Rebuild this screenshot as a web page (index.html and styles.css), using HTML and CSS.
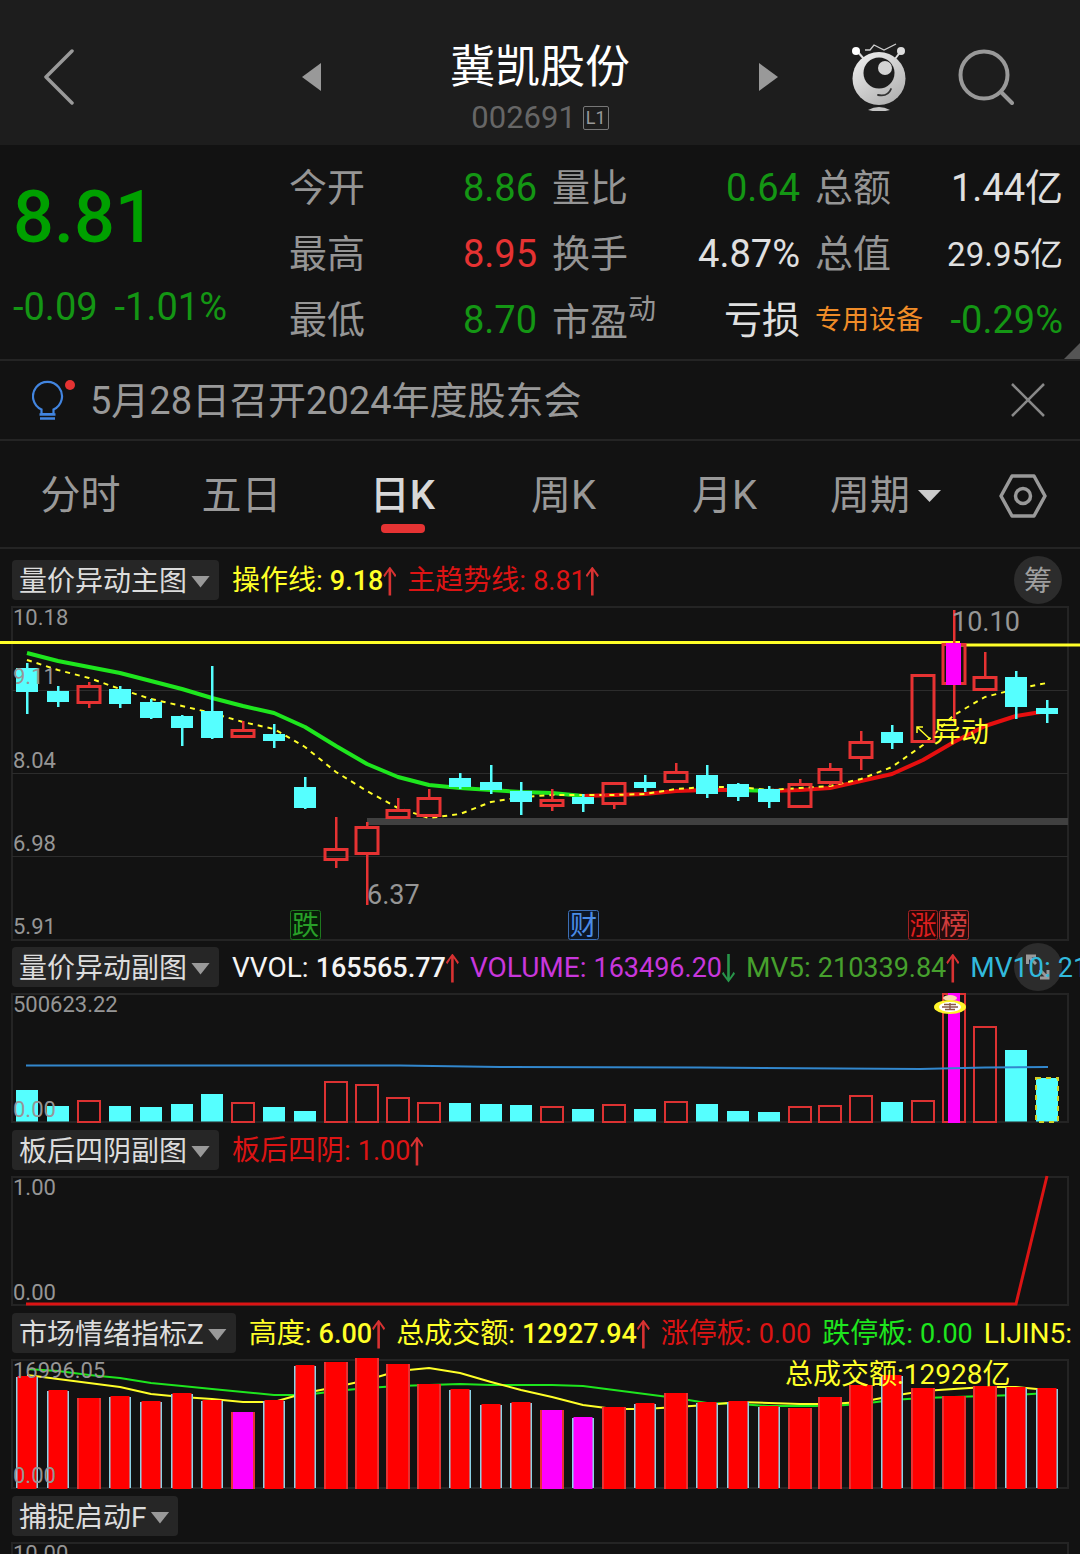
FILE: index.html
```html
<!DOCTYPE html>
<html lang="zh-CN">
<head>
<meta charset="utf-8">
<meta name="viewport" content="width=device-width, initial-scale=1">
<title>冀凯股份 002691</title>
<link rel="stylesheet" href="styles.css">
</head>
<body>
<div class="app">
  <header class="topbar">
    <div class="topbar-left">
      <button class="icon-btn" aria-label="返回"><svg width="30" height="56" viewBox="0 0 30 56"><path d="M28 2 2 28l26 26" fill="none" stroke="#9a9a9a" stroke-width="3.5" stroke-linecap="round" stroke-linejoin="round"/></svg></button>
      <button class="icon-btn" aria-label="上一只"><svg width="19" height="28" viewBox="0 0 19 28"><path d="M19 0v28L0 14z" fill="#999"/></svg></button>
    </div>
    <div class="title">
      <h1>冀凯股份</h1>
      <p class="code">002691<span class="level">L1</span></p>
    </div>
    <div class="topbar-right">
      <button class="icon-btn" aria-label="下一只"><svg width="19" height="28" viewBox="0 0 19 28"><path d="M0 0v28l19-14z" fill="#999"/></svg></button>
      <div class="tools">
        <button class="icon-btn" aria-label="智能助手">
          <svg width="54" height="68" viewBox="0 0 54 68">
            <defs><linearGradient id="face" x1="0" y1="0" x2="0.7" y2="1"><stop offset="0" stop-color="#f2f2f2"/><stop offset="1" stop-color="#b2b2b2"/></linearGradient></defs>
            <path d="M12 16 5 8M43 16l6-8" stroke="#ddd" stroke-width="2"/>
            <circle cx="4" cy="8" r="4" fill="#fff"/><circle cx="49" cy="8" r="4" fill="#ddd"/>
            <path d="M13 7h5l4-5 10 5 12-6" fill="none" stroke="#ccc" stroke-width="1.3"/>
            <circle cx="27" cy="35.500" r="26.500" fill="url(#face)"/>
            <circle cx="27" cy="30" r="15.500" fill="#1d1d1d"/>
            <circle cx="33" cy="25" r="7" fill="#d4d4d4"/>
            <path d="M26 52q10 2 13-6" fill="none" stroke="#333" stroke-width="1.800" stroke-linecap="round"/>
            <path d="M16 67q11-6 22 0q-11 3-22 0z" fill="#c4c4c4"/>
          </svg>
        </button>
        <button class="icon-btn" aria-label="搜索"><svg width="56" height="58" viewBox="0 0 56 58"><g fill="none" stroke="#999" stroke-width="4" stroke-linecap="round"><circle cx="26" cy="27" r="23.500"/><path d="m43 44 11 11"/></g></svg></button>
      </div>
    </div>
  </header>

  <section class="quote">
    <div class="price">
      <div class="last">8.81</div>
      <div class="change"><span>-0.09</span><span>-1.01%</span></div>
    </div>
    <dl class="stats">
      <div><dt>今开</dt><dd class="down">8.86</dd></div>
      <div><dt>量比</dt><dd class="down">0.64</dd></div>
      <div><dt>总额</dt><dd>1.44亿</dd></div>
      <div><dt>最高</dt><dd class="up">8.95</dd></div>
      <div><dt>换手</dt><dd>4.87%</dd></div>
      <div><dt>总值</dt><dd class="small">29.95亿</dd></div>
      <div><dt>最低</dt><dd class="down">8.70</dd></div>
      <div><dt>市盈<sup>动</sup></dt><dd>亏损</dd></div>
      <div><dt class="sector">专用设备</dt><dd class="down">-0.29%</dd></div>
    </dl>
  </section>

  <div class="notice">
    <svg class="bulb" width="44" height="42" viewBox="0 0 44 42">
      <g fill="none" stroke="#4285e0" stroke-width="2.200"><path d="M9.500 35v-4.500A14.500 14.500 0 1 1 21.500 30.500V35z"/><path d="M7.500 35.500h16M8 39.500h15" stroke-width="2.400"/></g>
      <circle cx="38" cy="6" r="5" fill="#e53333"/>
    </svg>
    <a href="#notice">5月28日召开2024年度股东会</a>
    <button class="icon-btn" aria-label="关闭"><svg width="36" height="36" viewBox="0 0 36 36"><path d="m2 2 32 32M34 2 2 34" stroke="#888" stroke-width="2.500"/></svg></button>
  </div>

  <nav class="tabs">
    <button>分时</button>
    <button>五日</button>
    <button class="active">日K</button>
    <button>周K</button>
    <button>月K</button>
    <button>周期<svg width="23" height="12" viewBox="0 0 23 12"><path d="M0 0h23L11.500 12z" fill="#ccc"/></svg></button>
    <button aria-label="设置"><svg width="48" height="44" viewBox="0 0 48 44"><g fill="none" stroke="#999" stroke-width="3.500" stroke-linejoin="round"><path d="M13 2h22l11 20-11 20H13L2 22z"/><circle cx="24" cy="22" r="7.500"/></g></svg></button>
  </nav>

  <section>
    <div class="head head-main">
      <button class="pill">量价异动主图<i class="caret"></i></button>
      <span class="ind yellow strong">操作线:<b>9.18</b><i class="arrow"></i></span>
      <span class="ind red">主趋势线:<b>8.81</b><i class="arrow"></i></span>
      <button class="round chips">筹</button>
    </div>
    <svg class="chart" id="main-chart" viewBox="0 606 1080 334">
      <path class="frame" d="M12 607h1056v333H12z"/>
      <path class="grid" d="M12 690.500h1056M12 773.500h1056M12 856.500h1056"/>
      <path d="M367 821.500h701" stroke="#404040" stroke-width="7"/>
      <path d="M0 642.500h960M960 645h120" stroke="#ffff28" stroke-width="3"/>
      <g data-lines></g>
      <g data-bars></g>
      <g class="axis"><text x="13" y="625">10.18</text><text x="13" y="684">9.11</text><text x="13" y="768">8.04</text><text x="13" y="851">6.98</text><text x="13" y="934">5.91</text></g>
      <g class="peak"><text x="952" y="631">10.10</text><text x="367" y="904">6.37</text></g>
      <path d="M930 739 917 727m0 6v-6h6" fill="none" stroke="#ffff28" stroke-width="1.500"/>
      <text class="note" x="933" y="742">异动</text>
      <g class="tag tag-green"><rect x="290.500" y="910.500" width="30" height="29" rx="2"/><text x="305.500" y="935">跌</text></g>
      <g class="tag tag-blue"><rect x="568.500" y="910.500" width="30" height="29" rx="2"/><text x="583.500" y="935">财</text></g>
      <g class="tag tag-red"><rect x="908.500" y="910.500" width="29" height="29" rx="2"/><text x="923" y="935">涨</text></g>
      <g class="tag tag-rose"><rect x="939.500" y="910.500" width="29" height="29" rx="2"/><text x="954" y="935">榜</text></g>
    </svg>
  </section>

  <section>
    <div class="head">
      <button class="pill">量价异动副图<i class="caret"></i></button>
      <span class="ind white strong">VVOL:<b>165565.77</b><i class="arrow"></i></span>
      <span class="ind violet">VOLUME:<b>163496.20</b><i class="arrow fall"></i></span>
      <span class="ind moss">MV5:<b>210339.84</b><i class="arrow"></i></span>
      <span class="ind aqua">MV10:<b>21</b></span>
      <button class="round expand" aria-label="展开"><svg width="24" height="26" viewBox="0 0 24 26"><g fill="none" stroke="#999" stroke-width="3"><path d="M1.500 10V2H10M2 2l8 8M22 16v8h-8M22 24l-8-8"/></g></svg></button>
    </div>
    <svg class="chart" id="volume-chart" viewBox="0 993 1080 130">
      <path class="frame" d="M12 994h1056v128H12z"/>
      <g data-bars></g>
      <g data-lines></g>
      <g><ellipse cx="950" cy="998" rx="7" ry="3" fill="#f6d9b0"/><ellipse cx="950" cy="1007" rx="16" ry="7" fill="#fff52a"/><ellipse cx="950" cy="1007" rx="11" ry="5" fill="#fff"/><path d="M944 1004.500h12M942 1007h16M945 1009.500h10M950 1003v7" stroke="#8a5a48" stroke-width="1.400"/></g>
      <g class="axis"><text x="13" y="1012">500623.22</text><text x="13" y="1117">0.00</text></g>
    </svg>
  </section>

  <section>
    <div class="head">
      <button class="pill">板后四阴副图<i class="caret"></i></button>
      <span class="ind red">板后四阴:<b>1.00</b><i class="arrow"></i></span>
    </div>
    <svg class="chart" viewBox="0 1176 1080 130">
      <path class="frame" d="M12 1177h1056v128H12z"/>
      <path d="M26 1304h990l31-128" fill="none" stroke="#dc1414" stroke-width="3"/>
      <g class="axis"><text x="13" y="1195">1.00</text><text x="13" y="1300">0.00</text></g>
    </svg>
  </section>

  <section>
    <div class="head">
      <button class="pill">市场情绪指标Z<i class="caret"></i></button>
      <span class="ind yellow strong">高度:<b>6.00</b><i class="arrow"></i></span>
      <span class="ind yellow strong">总成交额:<b>12927.94</b><i class="arrow"></i></span>
      <span class="ind red">涨停板:<b>0.00</b></span>
      <span class="ind green">跌停板:<b>0.00</b></span>
      <span class="ind yellow">LIJIN5:</span>
    </div>
    <svg class="chart" id="mood-chart" viewBox="0 1359 1080 130">
      <path class="frame" d="M12 1360h1056v128H12z"/>
      <g data-lines></g>
      <g data-bars></g>
      <text class="note" x="785" y="1384">总成交额:12928亿</text>
      <g class="axis"><text x="13" y="1378">16996.05</text><text x="13" y="1483">0.00</text></g>
    </svg>
  </section>

  <section>
    <div class="head">
      <button class="pill">捕捉启动F<i class="caret"></i></button>
    </div>
    <svg class="chart" viewBox="0 1542 1080 130">
      <path class="frame" d="M12 1543h1056v128H12z"/>
      <g class="axis"><text x="13" y="1561">10.00</text></g>
    </svg>
  </section>
</div>
<script src="script.js"></script>
</body>
</html>
```
FILE: styles.css
```css
* { box-sizing: border-box; }

body {
  margin: 0;
  background: #121212;
  color: #e0e0e0;
  font-family: Roboto, "Noto Sans CJK SC", sans-serif;
  line-height: 1.2;
}

button {
  margin: 0;
  padding: 0;
  border: 0;
  background: none;
  color: inherit;
  font: inherit;
  cursor: pointer;
}

h1, p, dl, dd { margin: 0; }
svg { display: block; }

.app { height: 100vh; overflow: hidden; }

/* top bar */
.topbar {
  display: grid;
  grid-template-columns: 1fr 438px 1fr;
  height: 145px;
  background: #1d1d1d;
}
.topbar-left, .topbar-right {
  display: flex;
  align-items: center;
  justify-content: space-between;
  padding-top: 9px;
}
.topbar-left { padding-left: 44px; }
.topbar-right { padding-right: 66px; }
.tools { display: flex; align-items: center; gap: 52px; }
.title { padding-top: 38px; text-align: center; }
.title h1 {
  color: #fff;
  font-size: 45px;
  font-weight: 400;
  line-height: 60px;
}
.code {
  display: flex;
  align-items: center;
  justify-content: center;
  gap: 7px;
  color: #666;
  font-size: 31px;
  line-height: 40px;
}
.level {
  padding: 0 2px;
  border: 1px solid #777;
  border-radius: 2px;
  color: #999;
  font-size: 18px;
  line-height: 22px;
}

/* quote */
.quote {
  position: relative;
  display: grid;
  grid-template-columns: 276px 1fr;
  padding: 9px 17px 7px 13px;
  border-bottom: 2px solid #242424;
}
.quote::after {
  content: "";
  position: absolute;
  right: 0;
  bottom: 0;
  width: 16px;
  height: 16px;
  background: #555;
  clip-path: polygon(100% 0, 100% 100%, 0 100%);
}
.price { color: #00a000; }
.last {
  padding-top: 20px;
  font-size: 72px;
  font-weight: 500;
  line-height: 88px;
}
.change {
  display: flex;
  gap: 17px;
  padding-top: 20px;
  color: #149614;
  font-size: 38px;
  line-height: 50px;
}
.stats {
  display: grid;
  grid-template-columns: repeat(3, 1fr);
  column-gap: 15px;
}
.stats div {
  display: flex;
  align-items: center;
  justify-content: space-between;
  height: 66px;
  padding-top: 3px;
  font-size: 38px;
  white-space: nowrap;
}
.stats dt { color: #959595; }
.stats sup { font-size: 28px; line-height: 28px; vertical-align: 16px; }
.stats .sector { color: #f08c28; font-size: 27px; }
.stats .down { color: #149614; }
.stats .up { color: #e63232; }
.stats .small { font-size: 33px; }

/* notice */
.notice {
  display: flex;
  align-items: center;
  height: 80px;
  padding: 0 34px 0 32px;
  border-bottom: 2px solid #242424;
}
.notice a {
  flex: 1;
  margin-left: 14px;
  padding-top: 4px;
  color: #999;
  font-size: 38px;
  text-decoration: none;
}

/* tabs */
.tabs {
  display: grid;
  grid-template-columns: repeat(6, 161fr) 114fr;
  height: 108px;
  border-bottom: 2px solid #242424;
  color: #999;
  font-size: 40px;
}
.tabs button {
  position: relative;
  display: flex;
  align-items: center;
  justify-content: center;
  gap: 8px;
  padding-top: 4px;
}
.tabs .active { color: #d8d8d8; font-weight: 500; }
.tabs .active::after {
  content: "";
  position: absolute;
  bottom: 14px;
  width: 44px;
  height: 9px;
  border-radius: 4px;
  background: #e53333;
}

/* indicator rows */
.head {
  position: relative;
  display: flex;
  align-items: center;
  gap: 11px;
  height: 53px;
  padding-left: 12px;
  overflow: hidden;
  white-space: nowrap;
  font-size: 28px;
}
.head-main { height: 57px; padding-top: 4px; }
.pill {
  display: flex;
  flex: none;
  align-items: center;
  gap: 4px;
  height: 40px;
  margin-right: 2px;
  padding: 4px 9px 0 7px;
  border-radius: 4px;
  background: #262626;
  color: #dcdcdc;
}
.caret {
  width: 19px;
  height: 12px;
  background: #999;
  clip-path: polygon(0 0, 100% 0, 50% 100%);
}
.ind {
  position: relative;
  z-index: 1;
  display: flex;
  flex: none;
  align-items: center;
  padding-top: 3px;
  pointer-events: none;
}
.ind b { margin-left: 7px; font-size: 27px; font-weight: 400; }
.strong b { font-weight: 500; }
.arrow {
  width: 13px;
  height: 29px;
  background: #d83232;
  clip-path: polygon(50% 0, 100% 30%, 90% 37%, 60% 16%, 60% 100%, 40% 100%, 40% 16%, 10% 37%, 0 30%);
}
.arrow.fall {
  background: #28964a;
  clip-path: polygon(50% 100%, 100% 70%, 90% 63%, 60% 84%, 60% 0, 40% 0, 40% 84%, 10% 63%, 0 70%);
}
.yellow { color: #ffff28; }
.red { color: #dc1414; }
.white { color: #f4f4f4; }
.violet { color: #c837dc; }
.moss { color: #46a02d; }
.aqua { color: #32b9dc; }
.green { color: #1ee61e; }

.round {
  display: flex;
  align-items: center;
  justify-content: center;
  width: 48px;
  height: 48px;
  border-radius: 50%;
  background: #2c2c2c;
  color: #a0a0a0;
}
.chips { margin: 0 18px 0 auto; padding-top: 4px; }
.expand {
  position: absolute;
  top: 3px;
  right: 18px;
}

/* charts */
.chart { width: 100%; height: auto; overflow: visible; }
.frame { fill: none; stroke: #242424; stroke-width: 2; }
.grid { fill: none; stroke: #2c2c2c; stroke-width: 1; }
.axis { fill: #969696; font-size: 22px; }
.peak { fill: #969696; font-size: 27px; }
.note { fill: #ffff28; font-size: 28px; }
.tag { font-size: 27px; text-anchor: middle; }
.tag-green rect { fill: #081c08; stroke: #1e781e; }
.tag-green text { fill: #28a028; }
.tag-blue rect { fill: #0c1624; stroke: #3c6eb4; }
.tag-blue text { fill: #4b8ce6; }
.tag-red rect { fill: #240808; stroke: #a02323; }
.tag-red text { fill: #dc1e1e; }
.tag-rose rect { fill: #240c0c; stroke: #b43232; }
.tag-rose text { fill: #d23c3c; }
```
FILE: script.js
```js
const NS = "http://www.w3.org/2000/svg";
const CYAN = "#55ffff";
const RED = "#e63232";
const MAGENTA = "#ff00ff";
const STEP = 30.9;
const centre = (i) => Math.round(27 + i * STEP);

function add(parent, tag, attrs) {
  const el = document.createElementNS(NS, tag);
  for (const key in attrs) el.setAttribute(key, attrs[key]);
  parent.appendChild(el);
}

function line(parent, first, ys, stroke, width, dash) {
  const points = ys.map((y, k) => centre(first + k) + "," + y).join(" ");
  const attrs = { points, fill: "none", stroke, "stroke-width": width, "stroke-linejoin": "round" };
  if (dash) attrs["stroke-dasharray"] = dash;
  add(parent, "polyline", attrs);
}

function rect(parent, x, y, width, height, attrs) {
  add(parent, "rect", Object.assign({ x, y, width, height }, attrs));
}

// kind (c = falling, r = rising), high, body top, body bottom, low
const candles = [
  ["c", 663, 668, 692, 714], ["c", 686, 691, 702, 707], ["r", 682, 685, 704, 708], ["c", 686, 689, 704, 708],
  ["c", 699, 702, 718, 719], ["c", 715, 716, 728, 746], ["c", 666, 711, 738, 739], ["r", 721, 729, 738, 738],
  ["c", 724, 734, 741, 748], ["c", 777, 787, 808, 809], ["r", 817, 848, 861, 868], ["r", 822, 826, 855, 905],
  ["r", 798, 809, 819, 819], ["r", 789, 797, 817, 817], ["c", 773, 778, 787, 789], ["c", 765, 782, 790, 794],
  ["c", 782, 791, 802, 815], ["r", 789, 799, 807, 811], ["c", 794, 797, 804, 812], ["r", 782, 782, 805, 809],
  ["c", 775, 782, 788, 792], ["r", 763, 771, 783, 783], ["c", 765, 775, 794, 798], ["c", 783, 784, 797, 801],
  ["c", 786, 789, 802, 808], ["r", 779, 783, 808, 808], ["r", 763, 768, 784, 786], ["r", 731, 741, 759, 770],
  ["c", 725, 732, 743, 749], ["r", 674, 674, 743, 743], ["r", 610, 643, 685, 722], ["r", 652, 676, 691, 691],
  ["c", 671, 677, 707, 719], ["c", 700, 708, 714, 723]
];

const main = document.getElementById("main-chart");
const mainLines = main.querySelector("[data-lines]");
const mainBars = main.querySelector("[data-bars]");
line(mainLines, 0, [653, 661, 667, 673, 681, 689, 698, 706, 713, 727, 746, 764, 777, 785, 788, 790, 792, 793, 796], "#1ee61e", 4);
line(mainLines, 18, [796, 795, 794, 791, 790, 790], "#e60f0f", 4);
line(mainLines, 23, [790, 791], "#1ee61e", 4);
line(mainLines, 24, [791, 790, 788, 781, 774, 760, 742, 726, 716, 711], "#e60f0f", 4);
line(mainLines, 0, [660, 670, 678, 689, 699, 706, 713, 722, 729, 747, 772, 791, 808, 818, 814, 802, 797, 795, 795, 795, 794, 789, 787, 787, 790, 788, 786, 779, 767, 745, 715, 697, 689, 683], "#ffff28", 2, "5 5");
candles.forEach(([kind, high, top, bottom, low], i) => {
  const x = centre(i);
  if (kind === "c") {
    rect(mainBars, x - 1, high, 2.5, low - high, { fill: CYAN });
    rect(mainBars, x - 11, top, 22, bottom - top, { fill: CYAN });
    return;
  }
  rect(mainBars, x - 1, high, 2.5, top - high, { fill: RED });
  rect(mainBars, x - 1, bottom, 2.5, low - bottom, { fill: RED });
  rect(mainBars, x - 11, top + 1.5, 22, bottom - top - 3, { fill: "none", stroke: RED, "stroke-width": 3 });
  if (i === 30) rect(mainBars, x - 8, top, 15, bottom - top, { fill: MAGENTA });
});

const volumes = [1090, 1106, 1100, 1106, 1107, 1104, 1094, 1102, 1107, 1111, 1081, 1084, 1097, 1102, 1103, 1104, 1105,
  1106, 1109, 1104, 1109, 1101, 1104, 1111, 1112, 1106, 1105, 1095, 1102, 1100, 993, 1026, 1050, 1078];
const volume = document.getElementById("volume-chart");
const volumeBars = volume.querySelector("[data-bars]");
volumes.forEach((top, i) => {
  const x = centre(i);
  if (candles[i][0] === "c") {
    rect(volumeBars, x - 11, top, 22, 1121.5 - top, { fill: CYAN });
    if (i === 33) rect(volumeBars, x - 11, top, 22, 1122 - top, { fill: "none", stroke: "#d2d228", "stroke-width": 2, "stroke-dasharray": "5 5" });
    return;
  }
  rect(volumeBars, x - 11, top + 1, 22, 1121 - top, { fill: "none", stroke: "#dc3232", "stroke-width": 2 });
  if (i === 30) rect(volumeBars, x - 6, top, 12, 1123 - top, { fill: MAGENTA });
});
add(volume.querySelector("[data-lines]"), "polyline", {
  points: "26,1065.5 400,1065.5 500,1067 700,1067.5 920,1069 985,1067.5 1048,1067",
  fill: "none", stroke: "#3287cd", "stroke-width": 2
});

const moods = [1376, 1390, 1398, 1396, 1401, 1393, 1400, 1412, 1400, 1365, 1362, 1358, 1364, 1384, 1389, 1404, 1402,
  1410, 1417, 1407, 1403, 1393, 1402, 1401, 1406, 1408, 1397, 1385, 1375, 1388, 1396, 1386, 1387, 1388];
const mood = document.getElementById("mood-chart");
const moodLines = mood.querySelector("[data-lines]");
const moodBars = mood.querySelector("[data-bars]");
line(moodLines, 0, [1369, 1371, 1375, 1378, 1383, 1386, 1389, 1392, 1395, 1395, 1391, 1388, 1386, 1385, 1384, 1385, 1385, 1385, 1386, 1390, 1394, 1398, 1403, 1404, 1406, 1406, 1406, 1404, 1400, 1398, 1397, 1396, 1395, 1393], "#1ee61e", 2);
line(moodLines, 0, [1375, 1379, 1383, 1387, 1394, 1397, 1399, 1402, 1402, 1393, 1387, 1380, 1371, 1368, 1373, 1382, 1390, 1397, 1405, 1409, 1409, 1407, 1405, 1402, 1403, 1404, 1404, 1402, 1396, 1391, 1389, 1387, 1387, 1390], "#ffff28", 2);
moods.forEach((top, i) => {
  const x = centre(i);
  const fill = [7, 17, 18].includes(i) ? MAGENTA : "#ff0000";
  if (candles[i][0] === "c") {
    rect(moodBars, x - 11, top + 1, 22, 1487 - top, { fill: "#8cd2e6" });
    rect(moodBars, x - 9.5, top, 19, 1489 - top, { fill });
  } else {
    rect(moodBars, x - 12, top, 24, 1489 - top, { fill: RED });
    rect(moodBars, x - 10, top, 20, 1489 - top, { fill });
  }
});
```
